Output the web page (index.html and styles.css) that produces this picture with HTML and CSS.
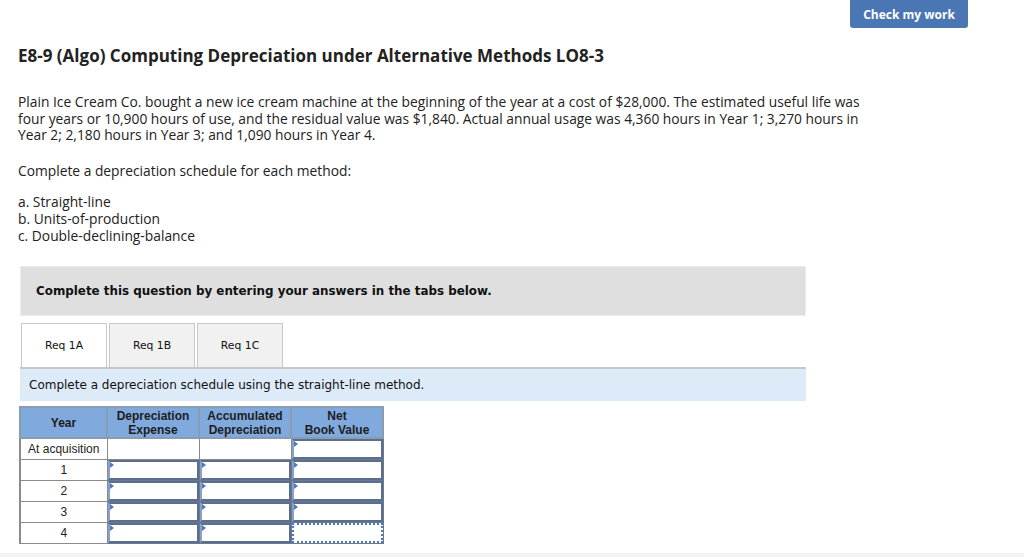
FILE: index.html
```html
<!DOCTYPE html>
<html>
<head>
<meta charset="utf-8">
<link rel="stylesheet" href="styles.css">
</head>
<body>
<div class="page">
  <div class="topbar"><button class="check">Check my work</button></div>
  <h1 class="title">E8-9 (Algo) Computing Depreciation under Alternative Methods LO8-3</h1>
  <p class="para">Plain Ice Cream Co. bought a new ice cream machine at the beginning of the year at a cost of $28,000. The estimated useful life was four years or 10,900 hours of use, and the residual value was $1,840. Actual annual usage was 4,360 hours in Year 1; 3,270 hours in Year 2; 2,180 hours in Year 3; and 1,090 hours in Year 4.</p>
  <p class="para2">Complete a depreciation schedule for each method:</p>
  <ul class="methods">
    <li>a. Straight-line</li>
    <li>b. Units-of-production</li>
    <li>c. Double-declining-balance</li>
  </ul>
  <div class="notice">Complete this question by entering your answers in the tabs below.</div>
  <div class="tabs">
    <div class="tab active">Req 1A</div>
    <div class="tab">Req 1B</div>
    <div class="tab">Req 1C</div>
  </div>
  <div class="instr">Complete a depreciation schedule using the straight-line method.</div>
  <table class="sched">
    <colgroup><col class="w1"><col class="w2"><col class="w2"><col class="w2"></colgroup>
    <thead>
      <tr><th>Year</th><th>Depreciation<br>Expense</th><th>Accumulated<br>Depreciation</th><th>Net<br>Book Value</th></tr>
    </thead>
    <tbody>
      <tr><td class="yr">At acquisition</td><td class="plain"></td><td class="plain"></td><td class="inp"><div class="box"></div></td></tr>
      <tr><td class="yr">1</td><td class="inp"><div class="box"></div></td><td class="inp"><div class="box"></div></td><td class="inp"><div class="box"></div></td></tr>
      <tr><td class="yr">2</td><td class="inp"><div class="box"></div></td><td class="inp"><div class="box"></div></td><td class="inp"><div class="box"></div></td></tr>
      <tr><td class="yr">3</td><td class="inp"><div class="box"></div></td><td class="inp"><div class="box"></div></td><td class="inp"><div class="box"></div></td></tr>
      <tr><td class="yr">4</td><td class="inp"><div class="box"></div></td><td class="inp"><div class="box"></div></td><td class="inp"><div class="box focus"></div></td></tr>
    </tbody>
  </table>
</div>
<div class="footer"></div>
</body>
</html>
```
FILE: styles.css
```css
html, body { margin: 0; padding: 0; background: #fff; }
body { font-family: "Open Sans", "Lato", sans-serif; color: #222; height: 560px; overflow: hidden; }
.page { height: 553px; }
.topbar { display: flex; justify-content: flex-end; padding-right: 56px; }
.check {
  width: 118px; height: 28px; border: 0; border-radius: 0 0 3px 3px;
  background: #4a76b3; color: #fff; font-family: "Open Sans", sans-serif;
  font-weight: 700; font-size: 12px; padding: 0; margin: 0;
}
.title { margin: 17px 0 0 18px; font-size: 17px; line-height: 22px; font-weight: 700; color: #222; letter-spacing: 0; }
.para { margin: 27px 0 0 18px; width: 862px; font-size: 13.8px; line-height: 16.6px; }
.para2 { margin: 19px 0 0 18px; font-size: 13.8px; line-height: 16.6px; }
.methods { list-style: none; margin: 14px 0 0 18px; padding: 0; font-size: 13.8px; line-height: 17px; }
.notice {
  margin: 22px 0 0 20px; height: 48px; background: #dfdfdf; border: 1px solid #ebebeb;
  font-family: "DejaVu Sans", Verdana, sans-serif; font-weight: 700; font-size: 11.9px; color: #111;
  display: flex; align-items: center; padding-left: 15px; width: 769px;
}
.tabs { display: flex; gap: 2px; margin: 7px 0 0 21px; }
.tab {
  width: 84px; height: 43px; border: 1px solid #c9c9c9; border-bottom: 0; background: #f1f1f1;
  font-family: "DejaVu Sans", Verdana, sans-serif; font-size: 10.8px; color: #111;
  display: flex; align-items: center; justify-content: center;
}
.tab.active { background: #fff; }
.instr {
  margin-left: 20px; width: 777px; height: 32px; border-top: 2px solid #c4c7cb; background: #ddebf8;
  font-family: "DejaVu Sans", Verdana, sans-serif; font-size: 12px; color: #111;
  display: flex; align-items: center; padding-left: 9px;
}
.sched { margin: 5px 0 0 19px; border-collapse: collapse; table-layout: fixed; width: 363px; font-family: "Liberation Sans", Arial, sans-serif; font-size: 12px; }
.w1 { width: 87px; }
.w2 { width: 92px; }
.sched th {
  background: #80a9dd; border: 2px solid #8c9cb0; color: #1d1d1d; font-weight: 700;
  font-size: 12px; line-height: 14px; height: 29px; padding: 0; vertical-align: middle;
}
.sched td { border: 1px solid #8a8a8a; height: 20px; padding: 0; background: #fff; }
.sched td.yr { text-align: center; color: #222; font-size: 12px; border-left-width: 2px; border-color: #8a8a8a; }
.sched td.inp { position: relative; border-color: #6b7890; }
.box { height: 16px; border: 2px solid #5a6f8e; border-left-color: #86a2cc; }
.box::before {
  content: ""; position: absolute; left: 2px; top: 2px;
  border-left: 4px solid #4d79bf; border-top: 3px solid transparent; border-bottom: 3px solid transparent;
}
.box.focus { border: 2px dotted #4d79bf; }
.box.focus::before { display: none; }
.footer { height: 4px; background: #f3f3f3; }
```
